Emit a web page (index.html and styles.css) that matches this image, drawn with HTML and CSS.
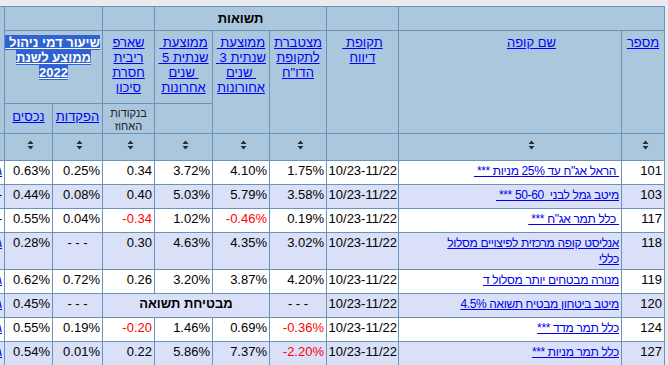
FILE: index.html
```html
<!DOCTYPE html>
<html lang="he" dir="rtl">
<head>
<meta charset="utf-8">
<title>תשואות קופות</title>
<link rel="stylesheet" href="styles.css">
</head>
<body>
<div class="wrap">
<table class="grid">
  <colgroup>
    <col class="c-num"><col class="c-name"><col class="c-per"><col class="c-cum"><col class="c-3y"><col class="c-5y"><col class="c-sh"><col class="c-dep"><col class="c-as"><col class="c-hid">
  </colgroup>
  <thead>
    <tr class="h1">
      <th colspan="2"></th>
      <th></th>
      <th colspan="3" class="group">תשואות</th>
      <th></th>
      <th colspan="2"></th>
      <th rowspan="3"></th>
    </tr>
    <tr class="h2">
      <th rowspan="2"><a href="#">מספר</a></th>
      <th rowspan="2" class="name"><a href="#">שם קופה</a></th>
      <th rowspan="2"><a href="#">תקופת&nbsp;<br>דיווח</a></th>
      <th rowspan="2"><a href="#">מצטברת<br>לתקופת<br>הדו"ח</a></th>
      <th rowspan="2"><a href="#">ממוצעת&nbsp;<br>שנתית 3&nbsp;<br>&nbsp;שנים<br>אחורונות</a></th>
      <th><a href="#">ממוצעת&nbsp;<br>שנתית 5&nbsp;<br>&nbsp;שנים<br>אחרונות</a></th>
      <th><a href="#">שארפ<br>ריבית<br>חסרת<br>סיכון</a></th>
      <th colspan="2"><a href="#" class="sel">שיעור דמי ניהול&nbsp;<br>ממוצע לשנת<br>2022</a></th>
    </tr>
    <tr class="h3">
      <th></th>
      <th class="small">בנקודות<br>האחוז</th>
      <th><a href="#">הפקדות</a></th>
      <th><a href="#">נכסים</a></th>
    </tr>
    <tr class="sort">
      <th><svg class="si" width="7" height="10" viewBox="0 0 7 10"><path d="M0.5 4 L3.5 0.5 L6.5 4Z M0.5 6 L3.5 9.5 L6.5 6Z"/></svg></th>
      <th class="name"><svg class="si" width="7" height="10" viewBox="0 0 7 10"><path d="M0.5 4 L3.5 0.5 L6.5 4Z M0.5 6 L3.5 9.5 L6.5 6Z"/></svg></th>
      <th></th>
      <th><svg class="si" width="7" height="10" viewBox="0 0 7 10"><path d="M0.5 4 L3.5 0.5 L6.5 4Z M0.5 6 L3.5 9.5 L6.5 6Z"/></svg></th>
      <th><svg class="si" width="7" height="10" viewBox="0 0 7 10"><path d="M0.5 4 L3.5 0.5 L6.5 4Z M0.5 6 L3.5 9.5 L6.5 6Z"/></svg></th>
      <th><svg class="si" width="7" height="10" viewBox="0 0 7 10"><path d="M0.5 4 L3.5 0.5 L6.5 4Z M0.5 6 L3.5 9.5 L6.5 6Z"/></svg></th>
      <th><svg class="si" width="7" height="10" viewBox="0 0 7 10"><path d="M0.5 4 L3.5 0.5 L6.5 4Z M0.5 6 L3.5 9.5 L6.5 6Z"/></svg></th>
      <th><svg class="si" width="7" height="10" viewBox="0 0 7 10"><path d="M0.5 4 L3.5 0.5 L6.5 4Z M0.5 6 L3.5 9.5 L6.5 6Z"/></svg></th>
      <th><svg class="si" width="7" height="10" viewBox="0 0 7 10"><path d="M0.5 4 L3.5 0.5 L6.5 4Z M0.5 6 L3.5 9.5 L6.5 6Z"/></svg></th>
      <th></th>
    </tr>
  </thead>
  <tbody>
    <tr class="odd">
      <td>101</td><td class="name"><a href="#">&nbsp;הראל אג"ח עד 25% מניות ***&nbsp;</a></td><td class="per">10/23-11/22</td>
      <td>1.75%</td><td>4.10%</td><td>3.72%</td><td>0.34</td><td>0.25%</td><td>0.63%</td><td><a href="#">גרף</a></td>
    </tr>
    <tr class="even">
      <td>103</td><td class="name"><a href="#">מיטב גמל לבני&nbsp; 50-60 ***&nbsp;</a></td><td class="per">10/23-11/22</td>
      <td>3.58%</td><td>5.79%</td><td>5.03%</td><td>0.40</td><td>0.08%</td><td>0.44%</td><td>-</td>
    </tr>
    <tr class="odd">
      <td>117</td><td class="name"><a href="#">&nbsp;כלל תמר אג"ח ***&nbsp;</a></td><td class="per">10/23-11/22</td>
      <td>0.19%</td><td><span class="neg">-0.46%</span></td><td>1.02%</td><td><span class="neg">-0.34</span></td><td>0.04%</td><td>0.55%</td><td>-</td>
    </tr>
    <tr class="even">
      <td>118</td><td class="name"><a href="#">אנליסט קופה מרכזית לפיצויים מסלול כללי</a></td><td class="per">10/23-11/22</td>
      <td>3.02%</td><td>4.35%</td><td>4.63%</td><td>0.30</td><td class="na">- - -</td><td>0.28%</td><td><a href="#">גרף</a></td>
    </tr>
    <tr class="odd">
      <td>119</td><td class="name"><a href="#">מנורה מבטחים יותר מסלול ד</a></td><td class="per">10/23-11/22</td>
      <td>4.20%</td><td>3.87%</td><td>3.20%</td><td>0.26</td><td>0.72%</td><td>0.62%</td><td><a href="#">גרף</a></td>
    </tr>
    <tr class="even">
      <td>120</td><td class="name"><a href="#">מיטב ביטחון מבטיח תשואה 4.5%</a></td><td class="per">10/23-11/22</td>
      <td class="na">- - -</td><td colspan="3" class="guar">מבטיחת תשואה</td><td class="na">- - -</td><td>0.45%</td><td><a href="#">גרף</a></td>
    </tr>
    <tr class="odd">
      <td>124</td><td class="name"><a href="#">כלל תמר מדד ***</a></td><td class="per">10/23-11/22</td>
      <td><span class="neg">-0.36%</span></td><td>0.69%</td><td>1.46%</td><td><span class="neg">-0.20</span></td><td>0.19%</td><td>0.55%</td><td><a href="#">גרף</a></td>
    </tr>
    <tr class="even">
      <td>127</td><td class="name"><a href="#">כלל תמר מניות ***</a></td><td class="per">10/23-11/22</td>
      <td><span class="neg">-2.20%</span></td><td>7.37%</td><td>5.86%</td><td>0.22</td><td>0.01%</td><td>0.54%</td><td><a href="#">גרף</a></td>
    </tr>
    <tr class="odd">
      <td>131</td><td class="name"><a href="#">מגדל מסלול כללי</a></td><td class="per">10/23-11/22</td>
      <td>2.10%</td><td>4.02%</td><td>4.11%</td><td>0.28</td><td>0.10%</td><td>0.50%</td><td><a href="#">גרף</a></td>
    </tr>
  </tbody>
</table>
</div>
</body>
</html>
```

FILE: styles.css
```css
html, body {
  margin: 0;
  height: 100%;
  overflow: hidden;
}
body {
  background: #e9ebef;
  padding: 6px 3px 0 0;
  box-sizing: border-box;
  font-family: "Liberation Sans", Arial, sans-serif;
  font-size: 13px;
  color: #000;
}
.wrap {
  direction: rtl;
  overflow: hidden;
}
.grid {
  border-collapse: collapse;
  table-layout: fixed;
  width: 720px;
}
.c-num { width: 43px; }
.c-name { width: 223px; }
.c-per { width: 72px; }
.c-cum { width: 57px; }
.c-3y { width: 57px; }
.c-5y { width: 58px; }
.c-sh { width: 52px; }
.c-dep { width: 50px; }
.c-as { width: 48px; }
.c-hid { width: 60px; }

.grid th, .grid td {
  border: 1px solid #6b93b8;
  padding: 2px;
  line-height: 15px;
}
.grid th {
  background: #abc7de;
  font-weight: normal;
  text-align: center;
  vertical-align: top;
}
.grid th a {
  color: #0000ff;
  text-decoration: underline;
}
.grid .h1 th {
  vertical-align: middle;
  height: 19px;
}
.group { font-weight: bold !important; }
.grid .h2 th {
  height: 66px;
  padding-top: 4px;
  padding-bottom: 2px;
}
.grid .h3 th {
  height: 24px;
  padding: 5px 2px 0;
}
.grid .h3 th.small {
  font-size: 11px;
  line-height: 13px;
  color: #222;
  height: 26px;
  padding-top: 3px;
}
.sel {
  background: #3163d0;
  color: #fff !important;
  font-weight: bold;
  white-space: nowrap;
}
.grid .sort th {
  height: 19px;
  padding: 6px 2px 1px 6px;
}
.si {
  display: block;
  margin: 0 auto;
  fill: #2a2a2a;
}
.grid th.name, .grid td.name {
  padding-left: 45px;
}
.grid td {
  vertical-align: top;
  text-align: right;
  height: 19px;
}
.grid td.per {
  white-space: nowrap;
  padding-left: 0;
  padding-right: 1px;
}
.grid td.name a {
  font-size: 12px;
  letter-spacing: -0.35px;
}
.odd td { background: #ffffff; }
.even td { background: #d9e0f7; }
.grid td a {
  color: #0000ee;
  text-decoration: underline;
}
.neg {
  color: #ff0000;
  direction: ltr;
  unicode-bidi: isolate;
}
.na { text-align: center !important; }
.guar {
  text-align: center !important;
  font-weight: bold;
}
```
